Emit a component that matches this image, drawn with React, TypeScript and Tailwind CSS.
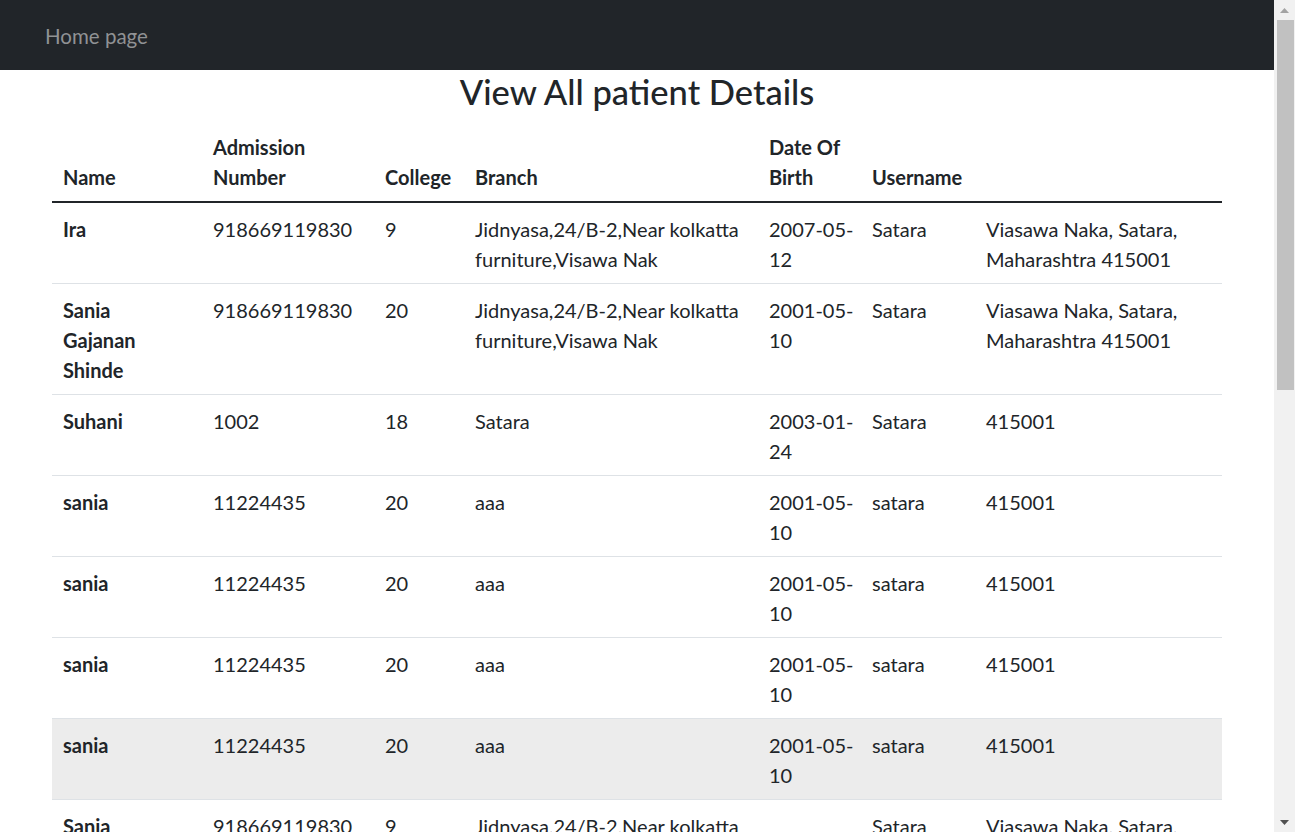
import React from "react";

type Patient = {
  name: string;
  admission: string;
  college: string;
  branch: string;
  dob: string;
  username: string;
  address: string;
};

const FULL_BRANCH = "Jidnyasa,24/B-2,Near kolkatta furniture,Visawa Nak";
const FULL_ADDR = "Viasawa Naka, Satara, Maharashtra 415001";

const sania: Patient = {
  name: "sania",
  admission: "11224435",
  college: "20",
  branch: "aaa",
  dob: "2001-05-10",
  username: "satara",
  address: "415001",
};

const PATIENTS: Patient[] = [
  { name: "Ira", admission: "918669119830", college: "9", branch: FULL_BRANCH, dob: "2007-05-12", username: "Satara", address: FULL_ADDR },
  { name: "Sania Gajanan Shinde", admission: "918669119830", college: "20", branch: FULL_BRANCH, dob: "2001-05-10", username: "Satara", address: FULL_ADDR },
  { name: "Suhani", admission: "1002", college: "18", branch: "Satara", dob: "2003-01-24", username: "Satara", address: "415001" },
  sania,
  sania,
  sania,
  sania,
  { name: "Sania Gajanan Shinde", admission: "918669119830", college: "9", branch: FULL_BRANCH, dob: "", username: "Satara", address: FULL_ADDR },
  { name: "Ira", admission: "918669119830", college: "9", branch: FULL_BRANCH, dob: "2007-05-12", username: "Satara", address: FULL_ADDR },
  { name: "Suhani", admission: "1002", college: "18", branch: "Satara", dob: "2003-01-24", username: "Satara", address: "415001" },
  sania,
  sania,
  sania,
  sania,
  sania,
];

const COLS = [150, 172, 90, 294, 103, 114, 247];

// decorative window scrollbar as seen in the screenshot
function Scrollbar() {
  return (
    <div className="w-[21px] h-screen bg-[#f1f1f1] flex flex-col items-center shrink-0">
      <div className="h-[20px] w-full flex items-center justify-center">
        <svg width="9" height="5" viewBox="0 0 9 5">
          <path d="M4.5 0 L9 5 L0 5 Z" fill="#a3a3a3" />
        </svg>
      </div>
      <div className="w-[17px] h-[370px] bg-[#c1c1c1] ml-[2px]" />
      <div className="flex-1" />
      <div className="h-[20px] w-full flex items-center justify-center">
        <svg width="9" height="5" viewBox="0 0 9 5">
          <path d="M0 0 L9 0 L4.5 5 Z" fill="#505050" />
        </svg>
      </div>
    </div>
  );
}

export default function App() {
  return (
    <div className="flex h-screen overflow-hidden bg-white">
      <div className="flex-1 min-w-0 text-[#212529] font-['Lato','Liberation_Sans',sans-serif] text-[20px] leading-[30px]">
        <nav className="h-[70px] bg-[#212529] flex items-center px-[45px]">
          <a className="text-[20.5px] text-[#909294] leading-[30px] pt-[2px]">Home page</a>
        </nav>

        <h2 className="text-center text-[34.5px] leading-[40px] font-medium mt-[2px] mb-[9px]">
          View All patient Details
        </h2>

        <div className="mx-auto w-[1170px] pb-[40px]">
          <table className="w-full table-fixed border-collapse">
            <colgroup>
              {COLS.map((w, i) => (
                <col key={i} style={{ width: w }} />
              ))}
            </colgroup>
            <thead>
              <tr className="border-b-2 border-[#212529]">
                {["Name", "Admission Number", "College", "Branch", "Date Of Birth", "Username", ""].map((h, i) => (
                  <th key={i} className="px-[11px] pt-[11px] pb-[9px] text-left align-bottom font-bold">
                    {h}
                  </th>
                ))}
              </tr>
            </thead>
            <tbody>
              {PATIENTS.map((p, i) => (
                <tr key={i} className={`border-b border-[#dee2e6] ${i === 6 ? "bg-[#ececec]" : ""}`}>
                  <th className="pl-[11px] pr-[16px] pt-[11px] pb-[9px] text-left align-top font-bold">{p.name}</th>
                  <td className="px-[11px] pt-[11px] pb-[9px] align-top">{p.admission}</td>
                  <td className="px-[11px] pt-[11px] pb-[9px] align-top">{p.college}</td>
                  <td className="px-[11px] pt-[11px] pb-[9px] align-top">{p.branch}</td>
                  <td className="pl-[11px] pr-[4px] pt-[11px] pb-[9px] align-top">{p.dob}</td>
                  <td className="px-[11px] pt-[11px] pb-[9px] align-top">{p.username}</td>
                  <td className="px-[11px] pt-[11px] pb-[9px] align-top">{p.address}</td>
                </tr>
              ))}
            </tbody>
          </table>
        </div>
      </div>
      <Scrollbar />
    </div>
  );
}
